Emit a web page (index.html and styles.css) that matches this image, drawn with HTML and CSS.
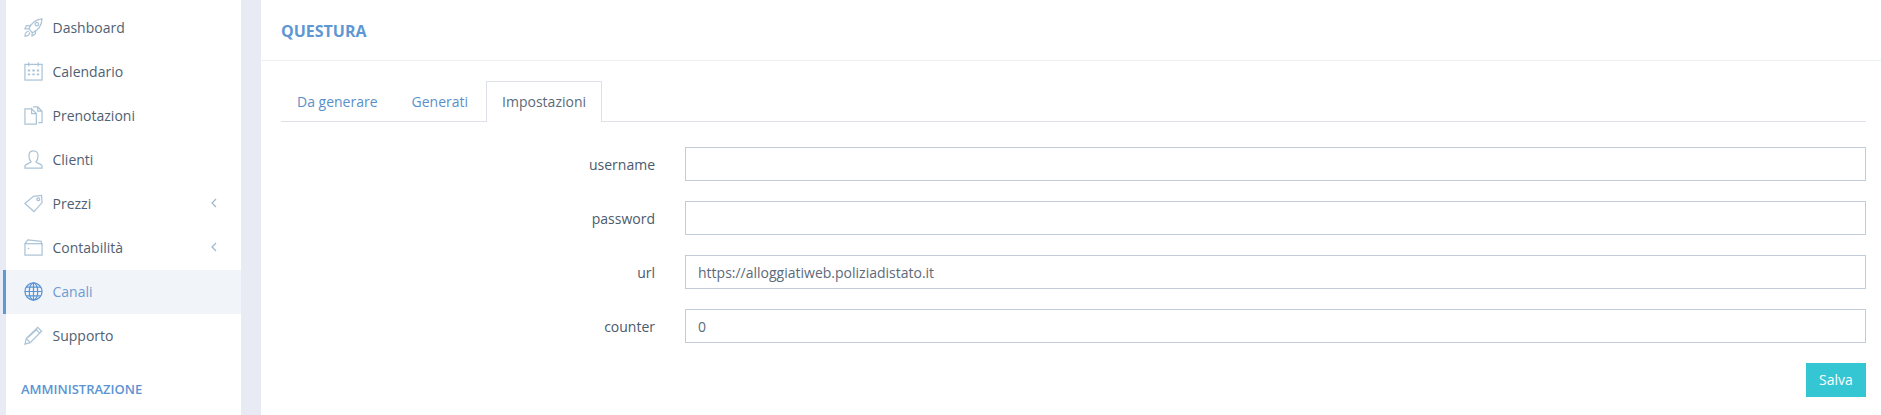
FILE: index.html
```html
<!DOCTYPE html>
<html>
<head>
    <meta name="viewport" content="width=device-width, initial-scale=1.0">
    <link rel="stylesheet" href="styles.css">
</head>
<body>
    <div class="sidebar">
        <a class="nav-item">
            <svg class="nav-icon" viewBox="0 0 20 20"><path d="M7 13.500 L5 11.500 C7 6.500 10.500 2 19 1 C18.500 9 14.500 13 9 15.500 Z"/><circle cx="13.500" cy="6.500" r="1.800"/><path d="M6 8 L2.500 8 L1 11.500 L5 11.500 M12 13 L12 16.500 L8.500 19 L8.500 15.500 M5 14 C2.500 14 1 16 1 19 C4 19 6 17.500 6 15"/></svg>
            <span>Dashboard</span>
        </a>
        <a class="nav-item">
            <svg class="nav-icon" viewBox="0 0 20 20"><rect x="1" y="2.500" width="18" height="16.500"/><path d="M5 0.500 V4.500 M15 0.500 V4.500"/><path class="dots" d="M4 9 h2.500 M8.800 9 h2.500 M13.500 9 h2.500 M4 13 h2.500 M8.800 13 h2.500 M13.500 13 h2.500"/></svg>
            <span>Calendario</span>
        </a>
        <a class="nav-item">
            <svg class="nav-icon" viewBox="0 0 20 20"><path d="M8 3 H1 V19 H13 V8 L8 3 V8 H13"/><path d="M9.500 1 H14.500 L19 5.500 V17.500 H15 M14.500 1 V5.500 H19"/></svg>
            <span>Prenotazioni</span>
        </a>
        <a class="nav-item">
            <svg class="nav-icon" viewBox="0 0 20 20"><path d="M1 19 H19 V17 C19 14.500 13.500 14 12.500 12.500 C14 11 14.800 9 14.800 6 C14.800 3 13 1 10 1 C7 1 5.200 3 5.200 6 C5.200 9 6 11 7.500 12.500 C6.500 14 1 14.500 1 17 Z"/></svg>
            <span>Clienti</span>
        </a>
        <a class="nav-item">
            <svg class="nav-icon" viewBox="0 0 20 20"><path d="M1 10 L10 2.500 L18.500 1.500 L19 9 L10.500 18.500 Z"/><circle cx="15" cy="5.500" r="1.500"/></svg>
            <span>Prezzi</span>
            <svg class="nav-arrow" viewBox="0 0 6 10"><path d="M5 1 L1 5 L5 9"/></svg>
        </a>
        <a class="nav-item">
            <svg class="nav-icon" viewBox="0 0 20 20"><path d="M1 6 L4 2 L18 3.500 L19 7"/><rect x="1" y="6" width="18" height="12"/><path d="M4 11 h1.500"/></svg>
            <span>Contabilità</span>
            <svg class="nav-arrow" viewBox="0 0 6 10"><path d="M5 1 L1 5 L5 9"/></svg>
        </a>
        <a class="nav-item active">
            <svg class="nav-icon" viewBox="0 0 20 20"><circle cx="10" cy="10" r="9"/><ellipse cx="10" cy="10" rx="4.500" ry="9"/><path d="M10 1 V19 M1 10 H19 M2.200 5.500 H17.800 M2.200 14.500 H17.800"/></svg>
            <span>Canali</span>
        </a>
        <a class="nav-item">
            <svg class="nav-icon" viewBox="0 0 20 20"><path d="M1 19 L2.500 13 L14.500 1.500 L18.500 5.500 L6.500 17.500 Z M2.500 13 L6.500 17.500 M12.500 3.500 L16.500 7.500 M4.500 12 L14 3"/></svg>
            <span>Supporto</span>
        </a>
        <div class="nav-heading">AMMINISTRAZIONE</div>
    </div>

    <div class="main">
        <div class="page-title">QUESTURA</div>
        <div class="page-body">
            <div class="tabs">
                <a class="tab">Da generare</a>
                <a class="tab">Generati</a>
                <a class="tab active">Impostazioni</a>
            </div>
            <form class="settings">
                <div class="form-row">
                    <label>username</label>
                    <input type="text" value="">
                </div>
                <div class="form-row">
                    <label>password</label>
                    <input type="text" value="">
                </div>
                <div class="form-row">
                    <label>url</label>
                    <input type="text" value="https://alloggiatiweb.poliziadistato.it">
                </div>
                <div class="form-row">
                    <label>counter</label>
                    <input type="text" value="0">
                </div>
                <div class="form-actions">
                    <button type="button" class="save-button">Salva</button>
                </div>
            </form>
        </div>
    </div>
</body>
</html>
```

FILE: styles.css
```css
* {
    margin: 0;
    padding: 0;
    box-sizing: border-box;
}

html, body {
    height: 415px;
    overflow: hidden;
}

body {
    background: #e8ebf3;
    color: #4b5a6b;
    font-family: "Open Sans", Arial, sans-serif;
    font-size: 14px;
    display: flex;
    padding-left: 6px;
}

.sidebar {
    width: 235px;
    flex-shrink: 0;
    background: white;
    padding-top: 6px;
    margin-right: 20px;
}

.nav-item {
    height: 44px;
    display: flex;
    align-items: center;
    padding: 0 24px 2px 18px;
    color: #4f6173;
    position: relative;
}

.nav-item span {
    margin-left: 9.5px;
    flex: 1;
}

.nav-icon {
    width: 19px;
    height: 19px;
    fill: none;
    stroke: #aac3d6;
    stroke-width: 1.3;
    flex-shrink: 0;
}

.nav-icon .dots {
    stroke-width: 2;
}

.nav-arrow {
    width: 6px;
    height: 10px;
    fill: none;
    stroke: #9db8cc;
    stroke-width: 1.2;
}

.nav-item.active {
    background: #f1f4f8;
    color: #6f9bd4;
}

.nav-item.active:before {
    content: "";
    position: absolute;
    left: -3px;
    top: 0;
    bottom: 0;
    width: 3px;
    background: #5b9bd5;
}

.nav-item.active .nav-icon {
    stroke: #5b94d3;
}

.nav-heading {
    margin-top: 22px;
    padding-left: 15px;
    color: #5b94d3;
    font-size: 13px;
    font-weight: 600;
}

.main {
    flex: 1;
    background: white;
}

.page-title {
    height: 61px;
    padding: 2px 20px 0;
    display: flex;
    align-items: center;
    color: #5f97d3;
    font-size: 16px;
    font-weight: 700;
    border-bottom: 1px solid #eef0f3;
}

.page-body {
    padding: 20px 15px 0 20px;
}

.tabs {
    display: flex;
    height: 41px;
    border-bottom: 1px solid #dde1e7;
}

.tab {
    padding: 0 15px;
    margin-right: 2px;
    height: 41px;
    line-height: 39px;
    color: #5b8fc9;
    border: 1px solid transparent;
    border-bottom: none;
}

.tab.active {
    background: white;
    color: #5c6a79;
    border-color: #dde1e7;
}

.settings {
    padding-top: 25px;
}

.form-row {
    display: flex;
    align-items: center;
    margin-bottom: 20px;
}

.form-row label {
    width: 374px;
    margin-right: 30px;
    text-align: right;
    color: #4b5a6b;
}

.form-row input {
    flex: 1;
    height: 34px;
    padding: 0 12px;
    border: 1px solid #c2cbd8;
    background: white;
    color: #5c6a79;
    font-family: inherit;
    font-size: 14px;
    outline: none;
}

.form-actions {
    display: flex;
    justify-content: flex-end;
}

.save-button {
    width: 60px;
    height: 34px;
    padding-bottom: 2px;
    background: #34c6d3;
    border: none;
    color: white;
    font-family: inherit;
    font-size: 14px;
}
```
